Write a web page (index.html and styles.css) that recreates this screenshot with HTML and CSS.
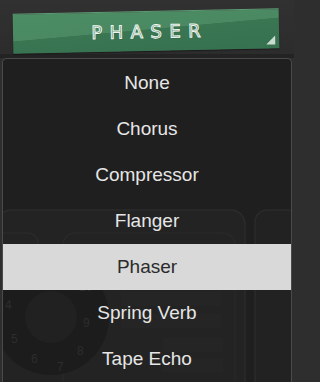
FILE: index.html
```html
<!DOCTYPE html>
<html>
<head>
<meta charset="utf-8">
<link rel="stylesheet" href="styles.css">
</head>
<body>
<div class="top">
  <div class="fx-button">
    <span class="fx-label">PHASER</span>
    <span class="fx-corner"></span>
  </div>
</div>
<div class="menu">
  <svg class="backdrop" width="290" height="326" viewBox="0 0 290 326" aria-hidden="true">
    <rect x="-6" y="151" width="248" height="200" rx="14" fill="#232323" stroke="#2b2b2b" stroke-width="1.5"/>
    <rect x="252" y="151" width="60" height="200" rx="12" fill="#222" stroke="#2b2b2b" stroke-width="1.5"/>
    <rect x="-10" y="174" width="45" height="40" rx="10" fill="none" stroke="#2a2a2a" stroke-width="1.5"/>
    <rect x="60" y="174" width="172" height="180" rx="12" fill="none" stroke="#292929" stroke-width="1.5"/>
    <circle cx="48" cy="258" r="58" fill="#1c1c1c"/>
    <circle cx="48" cy="258" r="26" fill="#212121"/>
    <path d="M118 240 h100 M118 262 h100 M160 286 h60 M160 306 h60" stroke="#252525" stroke-width="14"/>
    <g fill="#2d2d2d" font-family="Liberation Sans, sans-serif" font-size="12">
      <text x="8" y="222">3</text>
      <text x="2" y="250">4</text>
      <text x="8" y="284">5</text>
      <text x="28" y="304">6</text>
      <text x="54" y="312">7</text>
      <text x="74" y="296">8</text>
      <text x="80" y="268">9</text>
      <text x="76" y="232">10</text>
    </g>
  </svg>
  <ul class="items">
    <li class="item">None</li>
    <li class="item">Chorus</li>
    <li class="item">Compressor</li>
    <li class="item">Flanger</li>
    <li class="item selected">Phaser</li>
    <li class="item">Spring Verb</li>
    <li class="item">Tape Echo</li>
  </ul>
</div>
</body>
</html>
```
FILE: styles.css
```css
html, body {
  margin: 0;
  padding: 0;
  background: #2e2e2e;
}
body {
  width: 294px;
  height: 382px;
  overflow: hidden;
  font-family: "Liberation Sans", Arial, sans-serif;
}
.top {
  height: 58px;
  padding-top: 11px;
  box-sizing: border-box;
  background: linear-gradient(#313131, #2c2c2c);
  border-bottom: 4px solid #232323;
}
.fx-button {
  position: relative;
  margin-left: 13px;
  width: 266px;
  height: 40px;
  transform: rotate(-1.15deg);
  background: linear-gradient(176deg, #4c8d64 0%, #4a8962 46%, #3a7652 47%, #367150 100%);
  border-top: 1px solid #5e9c74;
  box-sizing: border-box;
  box-shadow: 0 1px 1px rgba(0,0,0,0.4);
  display: flex;
  align-items: center;
  justify-content: center;
}
.fx-label {
  font-family: "DejaVu Sans", sans-serif;
  font-size: 18px;
  letter-spacing: 7.5px;
  margin-right: -7.5px;
  color: #4f8d66;
  -webkit-text-stroke: 1px #eef4ef;
  text-shadow: 1px 1px 0 rgba(0,0,0,0.25);
  line-height: 1;
  margin-top: 1px;
}
.fx-corner {
  position: absolute;
  right: 4px;
  bottom: 4px;
  width: 0;
  height: 0;
  border-left: 9px solid transparent;
  border-bottom: 9px solid #c9ddd0;
}
.menu {
  position: relative;
  margin: 0 2px;
  height: 324px;
  background: #1f1f1f;
  border: 1px solid #4a4a4a;
  border-bottom: none;
  border-radius: 5px 5px 0 0;
  overflow: hidden;
}
.backdrop {
  position: absolute;
  left: 0;
  top: 0;
}
.items {
  position: relative;
  list-style: none;
  margin: 0;
  padding: 1px 0 0;
}
.item {
  height: 46px;
  display: flex;
  align-items: center;
  justify-content: center;
  font-size: 19px;
  color: #e6e6e6;
}
.item.selected {
  background: #d9d9d9;
  color: #2b2b2b;
}
```
